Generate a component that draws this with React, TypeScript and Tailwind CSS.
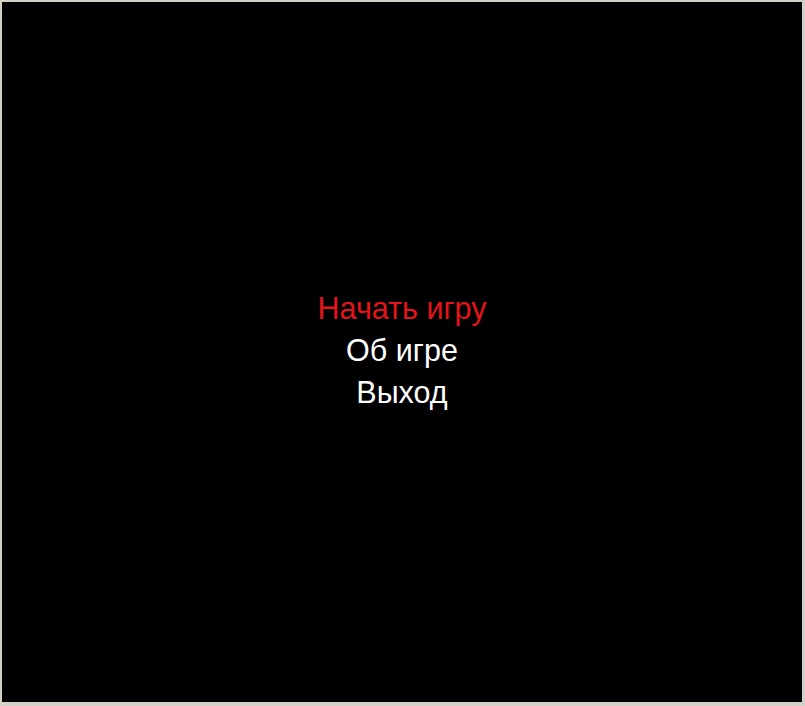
import React from 'react';

const items = [
  { label: 'Начать игру', active: true },
  { label: 'Об игре', active: false },
  { label: 'Выход', active: false },
];

export default function App() {
  return (
    <div className="w-[805px] h-[706px] bg-[#d4d0c8] pt-[2px] pl-[2px] pr-[3px] pb-[4px]">
      <div className="w-full h-full bg-black flex flex-col items-center justify-center pb-[4px] font-['Liberation_Sans',Arial,sans-serif]">
        {items.map((item) => (
          <div
            key={item.label}
            className={`text-[30.5px] leading-[42px] ${item.active ? 'text-[#e3141a]' : 'text-white'}`}
          >
            {item.label}
          </div>
        ))}
      </div>
    </div>
  );
}
